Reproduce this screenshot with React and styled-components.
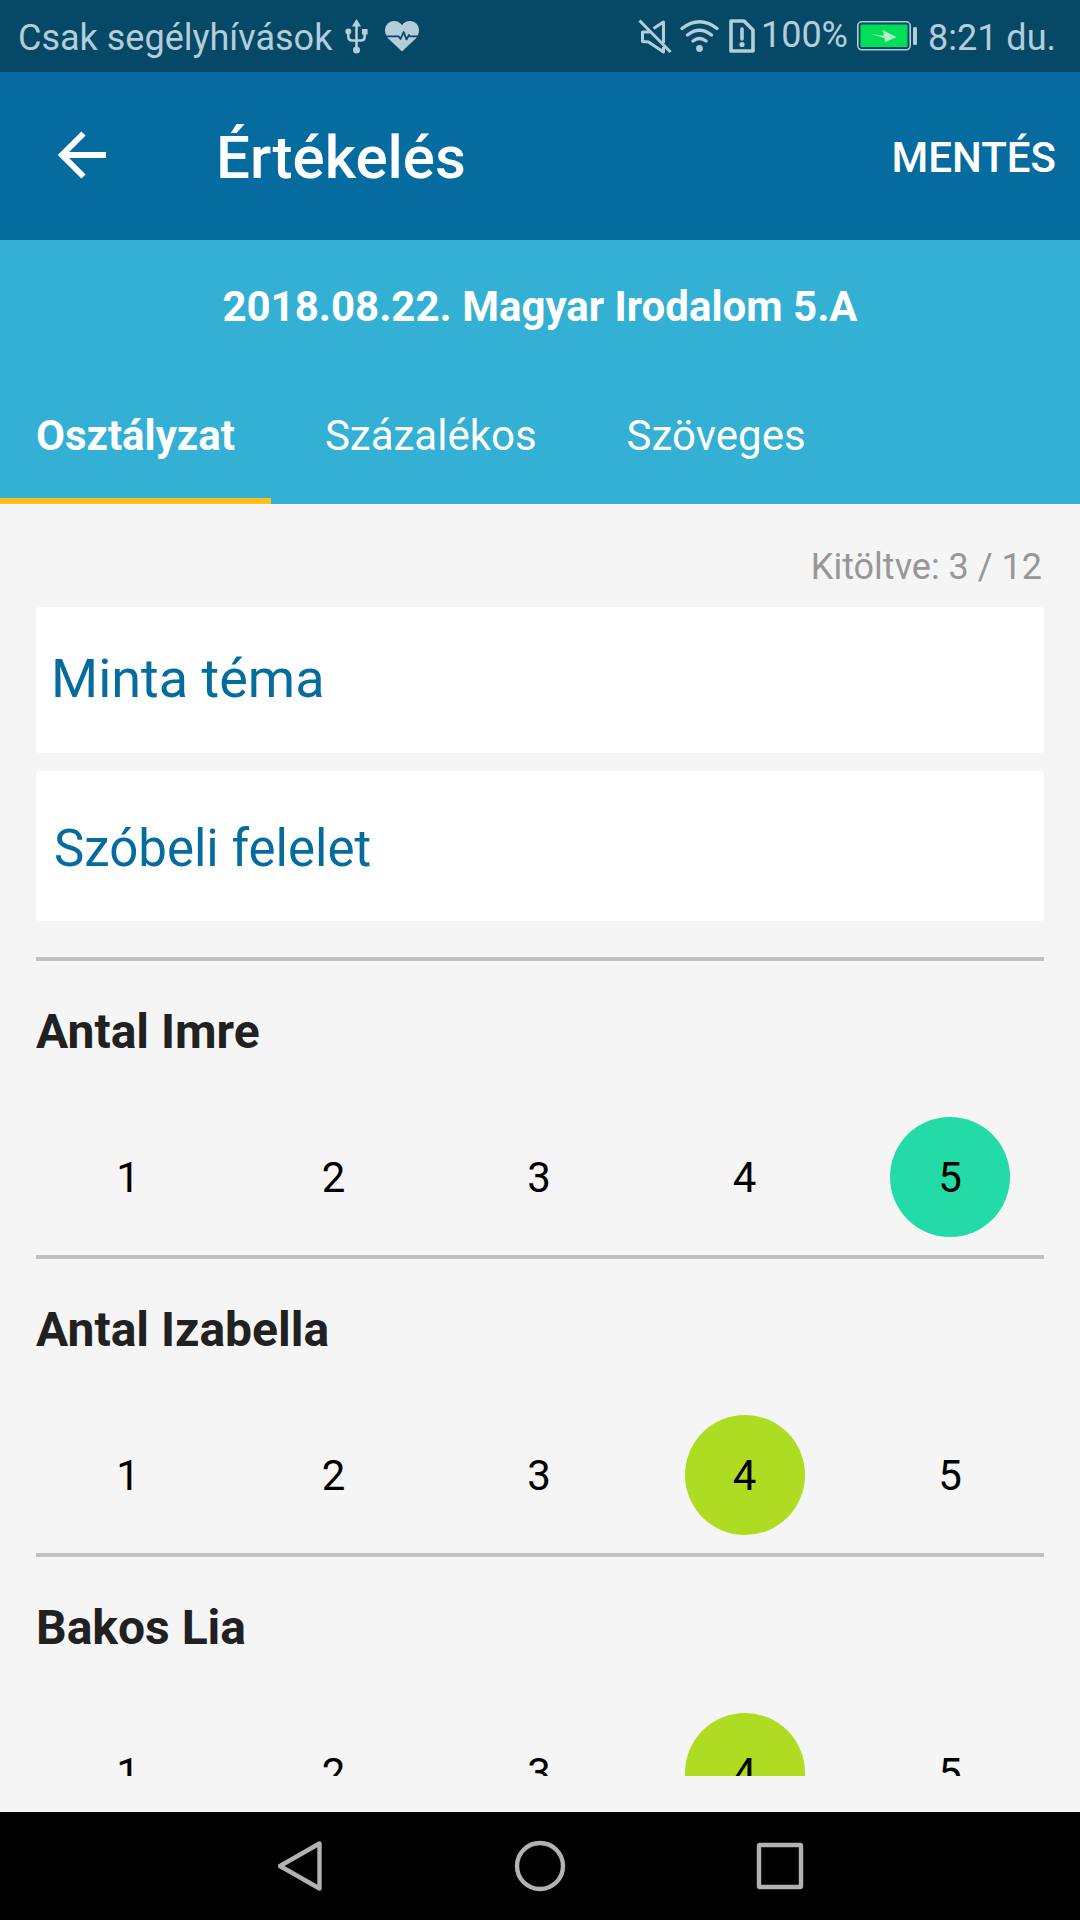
import React, { useState } from 'react';
import styled, { createGlobalStyle } from 'styled-components';

const GlobalStyle = createGlobalStyle`
  *, *::before, *::after { box-sizing: border-box; }
  html, body, #root { height: 100%; }
  body {
    margin: 0;
    background: #f5f5f5;
    font-family: Roboto, "Noto Sans", sans-serif;
  }
  h1, h2, p { margin: 0; }
  button, input {
    font-family: inherit;
    margin: 0;
    border: 0;
    padding: 0;
  }
  button { background: none; cursor: pointer; }
`;

const Screen = styled.div`
  display: flex;
  flex-direction: column;
  height: 100vh;
  overflow: hidden;
`;

const StatusBar = styled.div`
  flex: none;
  display: flex;
  align-items: center;
  justify-content: space-between;
  height: 72px;
  padding: 0 24px 0 18px;
  background: #054966;
  color: #b4cddb;
  font-size: 36px;
  line-height: 42px;
`;

const StatusGroup = styled.div`
  display: flex;
  align-items: center;
`;

const StatusIcon = styled.svg`
  flex: none;
  display: block;
  margin-left: ${(p) => p.$gap || 0}px;
  overflow: visible;
`;

const StatusText = styled.span`
  margin-left: ${(p) => p.$gap || 0}px;
  padding-top: 4px;
`;

const BatteryLevel = styled.span`
  margin-left: 6px;
  padding-bottom: 2px;
`;

const AppBar = styled.header`
  flex: none;
  display: flex;
  align-items: center;
  height: 168px;
  padding: 0 24px 0 46px;
  background: #066ca0;
  color: #fff;
`;

const BackButton = styled.button`
  display: flex;
  width: 72px;
  height: 72px;
  color: inherit;
`;

const Title = styled.h1`
  flex: 1;
  margin-left: 98px;
  padding-top: 4px;
  font-size: 60px;
  line-height: 70px;
  font-weight: 500;
`;

const SaveButton = styled.button`
  padding-top: 4px;
  color: inherit;
  font-size: 42px;
  line-height: 50px;
  font-weight: 500;
`;

const SubHeader = styled.div`
  flex: none;
  background: #33b0d4;
  color: #fff;
`;

const LessonTitle = styled.h2`
  padding: 42px 36px 40px;
  font-size: 42px;
  line-height: 50px;
  font-weight: 700;
  text-align: center;
`;

const Tabs = styled.div`
  display: flex;
  gap: 18px;
`;

const Tab = styled.button`
  height: 132px;
  padding: 2px 36px 0;
  border-bottom: 6px solid ${(p) => (p.$active ? '#fdc01f' : 'transparent')};
  color: inherit;
  font-size: 42px;
  line-height: 50px;
  font-weight: ${(p) => (p.$active ? 700 : 400)};
`;

const Main = styled.main`
  flex: 1;
  min-height: 0;
  display: flex;
  flex-direction: column;
  padding: 42px 36px 36px;
`;

const Counter = styled.p`
  flex: none;
  margin-bottom: 19px;
  padding-right: 2px;
  color: #979797;
  font-size: 36px;
  line-height: 42px;
  text-align: right;
`;

const Fields = styled.div`
  flex: none;
  display: flex;
  flex-direction: column;
  gap: 18px;
  margin-bottom: 36px;
`;

const TopicInput = styled.input`
  width: 100%;
  height: 146px;
  padding: 0 15px 4px;
  border-radius: 4px;
  background: #fff;
  color: #066ca0;
  font-size: 54px;
  outline: none;
`;

const TypeButton = styled.button`
  width: 100%;
  height: 150px;
  padding: 6px 18px 0;
  border-radius: 4px;
  background: #fff;
  color: #066ca0;
  font-size: 51px;
  line-height: 60px;
  text-align: left;
`;

const StudentList = styled.div`
  flex: 1;
  min-height: 0;
  overflow: hidden;
`;

const Student = styled.section`
  border-top: 4px solid #c1c1c1;
  padding: 43px 0 18px;
`;

const StudentName = styled.h2`
  margin-bottom: 57px;
  color: #212121;
  font-size: 48px;
  line-height: 56px;
  font-weight: 700;
`;

const Grades = styled.div`
  display: flex;
  justify-content: space-between;
  padding: 0 34px 0 32px;
`;

const gradeColors = {
  1: '#f4574b',
  2: '#f99a3c',
  3: '#fdd835',
  4: '#addc22',
  5: '#23dba7',
};

const Grade = styled.button`
  width: 120px;
  height: 120px;
  padding-top: 2px;
  border-radius: 50%;
  background: ${(p) => (p.$selected ? gradeColors[p.$value] : 'transparent')};
  color: #000;
  font-size: 42px;
  line-height: 50px;
`;

const NavBar = styled.nav`
  flex: none;
  display: flex;
  justify-content: center;
  height: 108px;
  background: #000;
`;

const NavButton = styled.button`
  display: flex;
  align-items: center;
  justify-content: center;
  width: 240px;
`;

const NavIcon = ({ children }) => (
  <svg width="52" height="52" viewBox="0 0 52 52" fill="none" stroke="#b2b2b2" strokeWidth="4.4" strokeLinejoin="round" aria-hidden="true">
    {children}
  </svg>
);

const tabs = ['Osztályzat', 'Százalékos', 'Szöveges'];

const students = [
  { name: 'Antal Imre', grade: 5 },
  { name: 'Antal Izabella', grade: 4 },
  { name: 'Bakos Lia', grade: 4 },
];

function StudentRow({ name, initial }) {
  const [grade, setGrade] = useState(initial);
  return (
    <Student>
      <StudentName>{name}</StudentName>
      <Grades role="group" aria-label={name}>
        {[1, 2, 3, 4, 5].map((n) => (
          <Grade key={n} type="button" $value={n} $selected={n === grade} aria-pressed={n === grade} onClick={() => setGrade(n)}>
            {n}
          </Grade>
        ))}
      </Grades>
    </Student>
  );
}

export default function App() {
  const [tab, setTab] = useState(tabs[0]);
  return (
    <Screen>
      <GlobalStyle />
      <StatusBar>
        <StatusGroup>
          <StatusText>Csak segélyhívások</StatusText>
          <StatusIcon $gap={13} width="23" height="35" viewBox="0 0 23 35" fill="none" stroke="currentColor" strokeWidth="2.6" aria-hidden="true">
            <path d="M11.5 5V31M3.3 12v5.500q0 4 4 4h8.400q4 0 4-4V12" />
            <path d="M11.500 0l4.700 7.500H6.800zM17 10h5.600v5.400H17z" fill="currentColor" stroke="none" />
            <circle cx="3.3" cy="12.500" r="3" fill="currentColor" stroke="none" />
            <circle cx="11.500" cy="31" r="3.500" fill="currentColor" stroke="none" />
          </StatusIcon>
          <StatusIcon $gap={17} width="34" height="30" viewBox="0 0 34 30" aria-hidden="true">
            <path fill="currentColor" d="M17 30.500L3.200 17.500C-1.500 12-1 4 4.500 1.200 9-1 14 0 17 4.200 20-0 25-1 29.500 1.200 35 4 35.500 12 30.800 17.500z" />
            <path fill="none" stroke="#054966" strokeWidth="1.800" strokeLinejoin="round" d="M0 15.300h13.500l2 2.700 3.200-7 2.800 7.500 2.500-4.500 1 1.300h9" />
          </StatusIcon>
        </StatusGroup>
        <StatusGroup>
          <StatusIcon width="32" height="32" viewBox="0 0 32 32" fill="none" stroke="currentColor" strokeWidth="3" strokeLinejoin="round" aria-hidden="true">
            <path d="M0.500 0.500l31 31.500M14.500 8.500L24.500 2v21M11 12H3.500v9.500l6 0.500 15 10v-5" />
          </StatusIcon>
          <StatusIcon $gap={9} width="39" height="33" viewBox="0 0 39 33" fill="none" stroke="currentColor" strokeWidth="3.400" strokeLinecap="round" aria-hidden="true">
            <path d="M2 8.500Q19.500-5 37 8.500M7.500 15Q19.500 5.500 31.500 15M13 21Q19.500 16 26 21" />
            <circle cx="19.500" cy="28.500" r="3.400" fill="currentColor" stroke="none" />
          </StatusIcon>
          <StatusIcon $gap={10} width="26" height="34" viewBox="0 0 26 34" fill="none" stroke="currentColor" strokeWidth="3.600" strokeLinejoin="round" aria-hidden="true">
            <path d="M2 2h13l9 9v21H2z" />
            <path d="M13 10v10" strokeLinecap="round" />
            <circle cx="13" cy="25.500" r="2.600" fill="currentColor" stroke="none" />
          </StatusIcon>
          <BatteryLevel>100%</BatteryLevel>
          <StatusIcon $gap={9} width="60" height="30" viewBox="0 0 60 30" aria-hidden="true">
            <rect x="0.800" y="0.800" width="52.400" height="28" rx="4" fill="none" stroke="currentColor" strokeWidth="1.600" />
            <rect x="3.500" y="3.500" width="47" height="22.600" rx="1" fill="#02de57" />
            <path d="M14.500 13.200l12.500 1.500-1.500-5.700 14 7-11.500 5.200-0.500-4.200z" fill="#b4f0c8" />
            <rect x="56" y="6" width="4" height="18" rx="1.500" fill="currentColor" />
          </StatusIcon>
          <StatusText $gap={11}>8:21 du.</StatusText>
        </StatusGroup>
      </StatusBar>

      <AppBar>
        <BackButton type="button" aria-label="Vissza">
          <svg width="72" height="72" viewBox="0 0 72 72" fill="none" stroke="currentColor" strokeWidth="6" aria-hidden="true">
            <path d="M37.500 13.500L16 35l21.500 21.500M16 35h44" />
          </svg>
        </BackButton>
        <Title>Értékelés</Title>
        <SaveButton type="button">MENTÉS</SaveButton>
      </AppBar>

      <SubHeader>
        <LessonTitle>2018.08.22. Magyar Irodalom 5.A</LessonTitle>
        <Tabs role="tablist">
          {tabs.map((t) => (
            <Tab key={t} type="button" role="tab" aria-selected={t === tab} $active={t === tab} onClick={() => setTab(t)}>
              {t}
            </Tab>
          ))}
        </Tabs>
      </SubHeader>

      <Main>
        <Counter>Kitöltve: 3 / 12</Counter>
        <Fields>
          <TopicInput aria-label="Téma" defaultValue="Minta téma" />
          <TypeButton type="button">Szóbeli felelet</TypeButton>
        </Fields>
        <StudentList>
          {students.map((s) => (
            <StudentRow key={s.name} name={s.name} initial={s.grade} />
          ))}
        </StudentList>
      </Main>

      <NavBar>
        <NavButton type="button" aria-label="Vissza a rendszerben">
          <NavIcon><path d="M45.500 3.500v45L6 26z" /></NavIcon>
        </NavButton>
        <NavButton type="button" aria-label="Kezdőképernyő">
          <NavIcon><circle cx="26" cy="26" r="23" /></NavIcon>
        </NavButton>
        <NavButton type="button" aria-label="Legutóbbi alkalmazások">
          <NavIcon><rect x="5" y="5" width="42" height="42" rx="1" /></NavIcon>
        </NavButton>
      </NavBar>
    </Screen>
  );
}
